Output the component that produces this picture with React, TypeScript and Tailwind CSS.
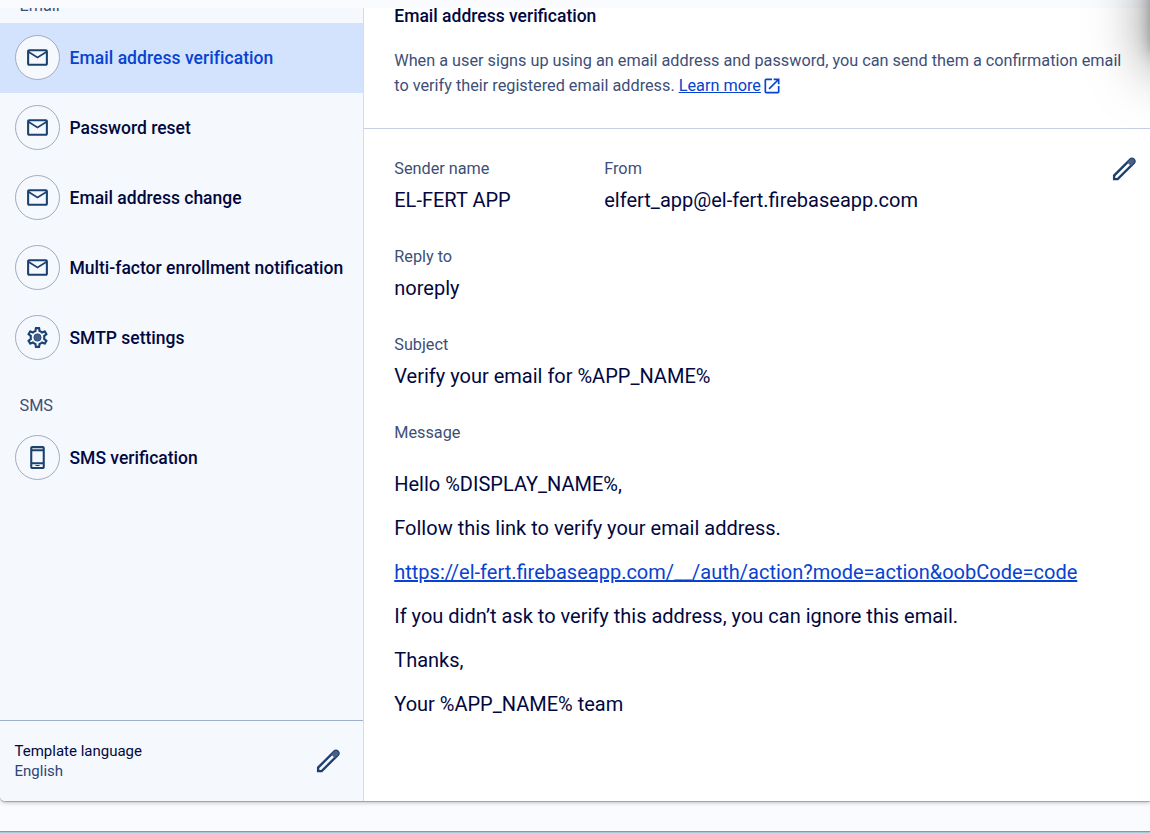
import React from "react";

function MailIcon() {
  return (
    <svg viewBox="0 0 24 24" className="size-[25px] shrink-0" fill="currentColor">
      <path d="M22 6c0-1.1-.9-2-2-2H4c-1.1 0-2 .9-2 2v12c0 1.1.9 2 2 2h16c1.1 0 2-.9 2-2V6zm-2 0l-8 5-8-5h16zm0 12H4V8l8 5 8-5v10z" />
    </svg>
  );
}

function GearIcon() {
  return (
    <svg viewBox="0 0 24 24" className="size-[25px] shrink-0" fill="currentColor">
      <path d="M19.43 12.98c.04-.32.07-.64.07-.98 0-.34-.03-.66-.07-.98l2.11-1.65c.19-.15.24-.42.12-.64l-2-3.46a.5.5 0 0 0-.61-.22l-2.49 1c-.52-.4-1.08-.73-1.69-.98l-.38-2.65A.488.488 0 0 0 14 2h-4c-.25 0-.46.18-.49.42l-.38 2.65c-.61.25-1.17.59-1.69.98l-2.49-1a.566.566 0 0 0-.18-.03c-.17 0-.34.09-.43.25l-2 3.46c-.13.22-.07.49.12.64l2.11 1.65c-.04.32-.07.65-.07.98s.03.66.07.98l-2.11 1.65c-.19.15-.24.42-.12.64l2 3.46a.5.5 0 0 0 .61.22l2.49-1c.52.4 1.08.73 1.69.98l.38 2.65c.03.24.24.42.49.42h4c.25 0 .46-.18.49-.42l.38-2.65c.61-.25 1.17-.59 1.69-.98l2.49 1c.06.02.12.03.18.03.17 0 .34-.09.43-.25l2-3.46c.12-.22.07-.49-.12-.64l-2.11-1.65zm-1.98-1.71c.04.31.05.52.05.73 0 .21-.02.43-.05.73l-.14 1.13.89.7 1.08.84-.7 1.21-1.27-.51-1.04-.42-.9.68c-.43.32-.84.56-1.25.73l-1.06.43-.16 1.13-.2 1.35h-1.4l-.19-1.35-.16-1.13-1.06-.43c-.43-.18-.83-.41-1.23-.71l-.91-.7-1.06.43-1.27.51-.7-1.21 1.08-.84.89-.7-.14-1.13c-.03-.31-.05-.54-.05-.74s.02-.43.05-.73l.14-1.13-.89-.7-1.08-.84.7-1.21 1.27.51 1.04.42.9-.68c.43-.32.84-.56 1.25-.73l1.06-.43.16-1.13.2-1.35h1.39l.19 1.35.16 1.13 1.06.43c.43.18.83.41 1.23.71l.91.7 1.06-.43 1.27-.51.7 1.21-1.07.85-.89.7.14 1.13z" />
      <circle cx="12" cy="12" r="3.5" fill="#45618a" stroke="currentColor" strokeWidth="0.7" />
    </svg>
  );
}

function PhoneIcon() {
  return (
    <svg viewBox="0 0 24 24" className="size-[25px] shrink-0" fill="currentColor">
      <path d="M17 1H7c-1.1 0-2 .9-2 2v18c0 1.1.9 2 2 2h10c1.1 0 2-.9 2-2V3c0-1.1-.9-2-2-2zm0 15.500H7V6h10v10.500zM7 18.500h10v2.500H7zM7 3h10v1H7z" fillRule="evenodd" />
      <path d="M10 19.200h4v1h-4z" />
    </svg>
  );
}

function PencilIcon() {
  return (
    <svg viewBox="0 0 24 24" className="size-[30px] shrink-0">
      <path
        d="M4.100 20.100V17.250L17.100 4.250a1.750 1.750 0 0 1 2.500 0l.35.35a1.750 1.750 0 0 1 0 2.500L6.950 20.100z"
        fill="none"
        stroke="#1f3f6e"
        strokeWidth="1.9"
      />
      <path d="M14.600 6.750l2.850 2.850 2.500-2.500a1.750 1.750 0 0 0 0-2.500l-.35-.35a1.750 1.750 0 0 0-2.500 0z" fill="#4a5f86" />
    </svg>
  );
}

const templates = [
  "Email address verification",
  "Password reset",
  "Email address change",
  "Multi-factor enrollment notification",
];

function NavItem({ label, icon, active = false }: { label: string; icon: React.ReactNode; active?: boolean }) {
  return (
    <div className={active ? "flex h-[70px] items-center bg-[#d3e3fd] pl-[15px]" : "flex h-[70px] items-center pl-[15px]"}>
      <span className="mb-px flex size-[45px] shrink-0 items-center justify-center rounded-full border border-[#a2abc0] bg-[#f5f8fd] pr-px text-[#1b416f]">
        {icon}
      </span>
      <span
        className={
          active
            ? "ml-[9.5px] whitespace-nowrap text-[17.5px] font-medium tracking-[0.05px] text-[#0842d0]"
            : "ml-[9.5px] whitespace-nowrap text-[17.5px] font-medium text-[#02083f]"
        }
      >
        {label}
      </span>
    </div>
  );
}

function Field({ label, value }: { label: string; value: string }) {
  return (
    <div className="flex flex-col">
      <span className="h-[26px] text-[16.25px] leading-[26px] text-[#3d4f78]">{label}</span>
      <span className="mt-[3px] h-[30px] text-[20px] leading-[30px] text-[#02083f]">{value}</span>
    </div>
  );
}

export default function App() {
  return (
    <div className="relative flex h-[833px] w-[1150px] flex-col overflow-hidden bg-[#f9fbff] font-['Roboto',sans-serif]">
      <div className="h-[8px] shrink-0" />
      <div className="flex h-[793px] shrink-0 rounded-bl-[5px] bg-white shadow-[0_1px_1px_rgba(0,0,0,0.25),0_2px_4px_rgba(0,0,0,0.2)] [clip-path:inset(0_0_-12px_0)]">
        <aside className="flex w-[364px] shrink-0 flex-col overflow-hidden rounded-bl-[5px] border-r border-[#d5dce8] bg-[#f5f8fd]">
          <div className="flex h-[15px] shrink-0 items-end overflow-hidden pl-[19.5px]">
            <span className="mb-[7px] h-[20px] text-[16.25px] leading-[20px] text-[#3d4f78]">Email</span>
          </div>
          {templates.map((t, i) => (
            <NavItem key={t} label={t} icon={<MailIcon />} active={i === 0} />
          ))}
          <NavItem label="SMTP settings" icon={<GearIcon />} />
          <div className="flex h-[50px] items-center pt-[17px] pl-[19.5px] text-[16.25px] text-[#3d4f78]">SMS</div>
          <NavItem label="SMS verification" icon={<PhoneIcon />} />
          <div className="mt-auto flex h-[81px] shrink-0 items-center justify-between border-t border-[#9fb0cc] pr-[20px] pl-[14.5px]">
            <div className="flex flex-col text-[15px] leading-[20px]">
              <span className="text-[#02083f]">Template language</span>
              <span className="text-[#2c4677]">English</span>
            </div>
            <PencilIcon />
          </div>
        </aside>
        <main className="flex min-w-0 flex-1 flex-col">
          <header className="flex h-[121px] shrink-0 flex-col border-b border-[#c7cfe0] pl-[30.25px]">
            <h1 className="-mt-[5px] h-[26px] text-[17.5px] leading-[26px] font-medium text-[#02083f]">
              Email address verification
            </h1>
            <p className="mt-[19px] text-[16.25px] leading-[25px] whitespace-nowrap text-[#3d4f78]">
              When a user signs up using an email address and password, you can send them a confirmation email
              <br />
              to verify their registered email address.{" "}
              <a className="text-[#0842d0] underline">Learn more</a>
              <svg viewBox="0 0 24 24" className="ml-[1px] inline size-[20px] align-[-5px]" fill="#0842d0">
                <path d="M19 19H5V5h7V3H5a2 2 0 0 0-2 2v14a2 2 0 0 0 2 2h14c1.100 0 2-.9 2-2v-7h-2v7zM14 3v2h3.590l-9.830 9.830 1.410 1.410L19 6.410V10h2V3h-7z" />
              </svg>
            </p>
          </header>
          <section className="flex flex-col pt-[27px] pl-[30.25px]">
            <div className="flex h-[88px]">
              <div className="w-[210px]">
                <Field label="Sender name" value="EL-FERT APP" />
              </div>
              <Field label="From" value="elfert_app@el-fert.firebaseapp.com" />
              <div className="-mt-[2px] mr-[11px] ml-auto">
                <PencilIcon />
              </div>
            </div>
            <div className="h-[88px]">
              <Field label="Reply to" value="noreply" />
            </div>
            <div className="h-[88px]">
              <Field label="Subject" value="Verify your email for %APP_NAME%" />
            </div>
            <span className="h-[26px] text-[16.25px] leading-[26px] text-[#3d4f78]">Message</span>
            <div className="mt-[23px] flex flex-col gap-[14px] text-[20px] leading-[30px] text-[#02083f]">
              <p>Hello %DISPLAY_NAME%,</p>
              <p>Follow this link to verify your email address.</p>
              <p>
                <a className="text-[#0842d0] underline">https://el-fert.firebaseapp.com/__/auth/action?mode=action&amp;oobCode=code</a>
              </p>
              <p>If you didn’t ask to verify this address, you can ignore this email.</p>
              <p>Thanks,</p>
              <p>Your %APP_NAME% team</p>
            </div>
          </section>
        </main>
      </div>
      <div className="mt-auto h-[2px] shrink-0 border-t border-[#7b9cb2] bg-[#a3cbdb]" />
      <div className="absolute top-[-40px] left-[1152px] h-[95px] w-[60px] rounded-[8px] shadow-[0_10px_60px_rgba(0,0,0,0.55),0_0_16px_rgba(0,0,0,0.35)]" />
    </div>
  );
}
